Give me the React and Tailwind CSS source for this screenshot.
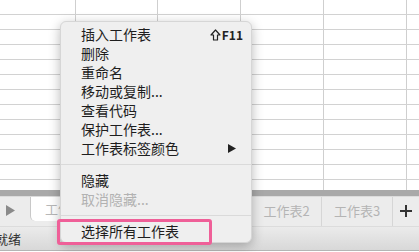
import React from "react";

const rows = Array.from({ length: 13 });
const cols = [76, 82, 83, 83, 83, 40];

const menuGroups = [
  [
    { label: "插入工作表", shortcut: true },
    { label: "删除" },
    { label: "重命名" },
    { label: "移动或复制..." },
    { label: "查看代码" },
    { label: "保护工作表..." },
    { label: "工作表标签颜色", submenu: true },
  ],
  [{ label: "隐藏" }, { label: "取消隐藏...", disabled: true }],
  [{ label: "选择所有工作表" }],
];

function ShiftIcon() {
  return (
    <svg width="11" height="12" viewBox="0 0 11 12" className="mr-[1px]">
      <path
        d="M5.5 1 L10 6 H7.5 V11 H3.5 V6 H1 Z"
        fill="none"
        stroke="#222"
        strokeWidth="1.2"
        strokeLinejoin="round"
      />
    </svg>
  );
}

export default function App() {
  return (
    <div
      className="relative w-[419px] h-[252px] overflow-hidden bg-white"
      style={{ fontFamily: '"Noto Sans CJK SC", "Noto Sans", sans-serif' }}
    >
      {/* sheet grid */}
      <div className="h-[190px] overflow-hidden">
        {rows.map((_, i) => (
          <div key={i} className="flex h-[15px] border-b border-[#d2d2d2]">
            {cols.map((w, j) => (
              <div
                key={j}
                className="h-full border-r border-[#cfcfcf] shrink-0"
                style={{ width: w }}
              />
            ))}
          </div>
        ))}
      </div>
      <div className="h-[6px] bg-[#a9a9a9]" />

      {/* sheet tabs */}
      <div className="flex h-[31px] bg-[#ececec] border-t border-[#dcdcdc] border-b border-[#c9c9c9]">
        <div className="w-[30px] flex items-center pl-[6px] pb-[2px]">
          <svg width="9" height="11" viewBox="0 0 9 11">
            <path d="M0 0 L9 5.5 L0 11 Z" fill="#8a8a8a" />
          </svg>
        </div>
        <div className="w-[222px] h-[24px] bg-white border-l border-[#c8c8c8] rounded-bl-[5px] flex items-center pl-[14px] text-[13px] text-[#b8b8b8]">
          工作表1
        </div>
        <div className="w-[70px] flex items-center justify-center text-[13px] text-[#b4b4b4] border-r border-[#d6d6d6] pb-[2px]">
          工作表2
        </div>
        <div className="w-[71px] flex items-center justify-center text-[13px] text-[#b4b4b4] border-r border-[#d6d6d6] pb-[2px]">
          工作表3
        </div>
        <div className="flex-1 flex items-center justify-center pb-[2px]">
          <svg width="12" height="12" viewBox="0 0 12 12">
            <path d="M6 0 V12 M0 6 H12" stroke="#333" strokeWidth="2" />
          </svg>
        </div>
      </div>

      {/* status bar */}
      <div className="h-[24px] bg-gradient-to-b from-[#ebebeb] to-[#d8d8d8] border-b border-[#b5b5b5] flex items-center">
        <span className="ml-[-5px] text-[13px] text-[#333]">就绪</span>
      </div>

      {/* context menu */}
      <div className="absolute left-[60px] top-[21px] w-[192px] h-[222px] bg-[#efefef] rounded-[6px] border border-[#d6d6d6] shadow-[0_3px_12px_rgba(0,0,0,0.28)] pt-[3px]">
        {menuGroups.map((group, gi) => (
          <div key={gi}>
            {gi > 0 && <div className="h-px bg-[#dadada] my-[6px]" />}
            {group.map((item) => (
              <div
                key={item.label}
                className={`flex items-center h-[19px] pl-[20px] pr-[8px] text-[14px] leading-[19px] ${
                  item.disabled ? "text-[#b2b2b2]" : "text-[#1e1e1e]"
                }`}
              >
                <span className="flex-1">{item.label}</span>
                {item.shortcut && (
                  <span className="flex items-center text-[12px] font-semibold text-[#222]">
                    <ShiftIcon />
                    F11
                  </span>
                )}
                {item.submenu && (
                  <svg width="8" height="9" viewBox="0 0 8 9" className="mr-[7px]">
                    <path d="M0 0 L8 4.5 L0 9 Z" fill="#222" />
                  </svg>
                )}
              </div>
            ))}
          </div>
        ))}
      </div>

      {/* highlight */}
      <div className="absolute left-[57px] top-[219px] w-[155px] h-[26px] border-[3px] border-[#ef5f98] rounded-[3px]" />
    </div>
  );
}
